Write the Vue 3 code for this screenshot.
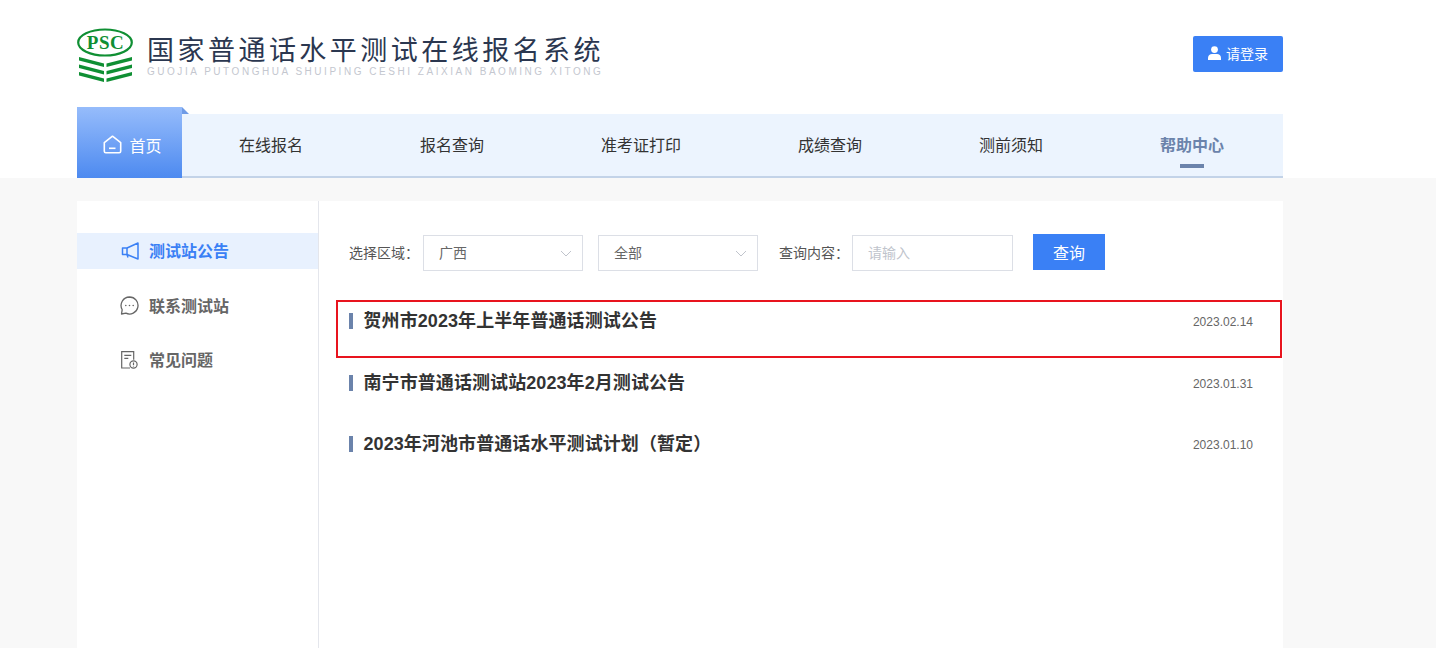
<script setup>
const navItems = ['在线报名', '报名查询', '准考证打印', '成绩查询', '测前须知', '帮助中心']
const notices = [
  { title: '贺州市2023年上半年普通话测试公告', date: '2023.02.14' },
  { title: '南宁市普通话测试站2023年2月测试公告', date: '2023.01.31' },
  { title: '2023年河池市普通话水平测试计划（暂定）', date: '2023.01.10' }
]
</script>

<template>
  <div class="page">
    <div class="top">
      <header class="header">
        <div class="brand">
          <svg class="logo" width="58" height="56" viewBox="0 0 58 56">
            <ellipse cx="28" cy="14.5" rx="26.8" ry="13" fill="none" stroke="#0f8f33" stroke-width="2.2" />
            <text x="28.5" y="21" text-anchor="middle" class="logo-text">PSC</text>
            <g fill="#0f8f33">
              <polygon points="2,29 27,35.5 27,39 2,32.5" />
              <polygon points="55,29 29.5,35.5 29.5,39 55,32.5" />
              <polygon points="2,36.5 27,43 27,46.5 2,40" />
              <polygon points="55,36.5 29.5,43 29.5,46.5 55,40" />
              <polygon points="2,44 27,50.5 27,54 2,47.5" />
              <polygon points="55,44 29.5,50.5 29.5,54 55,47.5" />
            </g>
          </svg>
          <div class="brand-text">
            <div class="brand-cn">国家普通话水平测试在线报名系统</div>
            <div class="brand-en">GUOJIA PUTONGHUA SHUIPING CESHI ZAIXIAN BAOMING XITONG</div>
          </div>
        </div>
        <button class="login">
          <svg width="13" height="14" viewBox="0 0 13 14" fill="#fff">
            <circle cx="6.5" cy="3.6" r="3.4" />
            <path d="M0 14v-2C0 9.4 2 8 4 8h5c2 0 4 1.4 4 4v2z" />
          </svg>
          <span>请登录</span>
        </button>
      </header>
      <nav class="nav">
        <a class="home">
          <svg width="19" height="19" viewBox="0 0 19 19" fill="none" stroke="#fff" stroke-width="1.6">
            <path d="M1.3 7.6 9.5 1.2l8.2 6.4v8.6a1.5 1.5 0 0 1-1.5 1.5H2.8a1.5 1.5 0 0 1-1.5-1.5z" stroke-linejoin="round" />
            <path d="M6 13.3h6.5" />
          </svg>
          <span>首页</span>
          <i class="fold"></i>
        </a>
        <div class="nav-list">
          <a v-for="(item, i) in navItems" :key="item" class="nav-item" :class="{ current: i === navItems.length - 1 }">{{ item }}</a>
        </div>
      </nav>
    </div>

    <main class="card">
      <aside class="side">
        <div class="side-item active">
          <span class="side-icon">
            <svg width="18" height="18" viewBox="0 0 18 18" fill="none" stroke="#3a80f5" stroke-width="1.5" stroke-linejoin="round">
              <path d="M17 1v16L6 12.5H1.5V6H6z" />
              <path d="M6 6v6.5l1 3" />
            </svg>
          </span>
          <span class="side-label">测试站公告</span>
        </div>
        <div class="side-item">
          <span class="side-icon">
            <svg width="19" height="19" viewBox="0 0 19 19" fill="none" stroke="#666" stroke-width="1.3">
              <path d="M9.5 1a8.5 8.5 0 1 1-3.6 16.2L1.5 18l.7-4.3A8.5 8.5 0 0 1 9.5 1z" stroke-linejoin="round" />
              <circle cx="5.8" cy="9.5" r=".8" fill="#666" stroke="none" />
              <circle cx="9.5" cy="9.5" r=".8" fill="#666" stroke="none" />
              <circle cx="13.2" cy="9.5" r=".8" fill="#666" stroke="none" />
            </svg>
          </span>
          <span class="side-label">联系测试站</span>
        </div>
        <div class="side-item">
          <span class="side-icon">
            <svg width="17" height="18" viewBox="0 0 17 18" fill="none" stroke="#666" stroke-width="1.2">
              <path d="M9 17H.7V.7h12v8" />
              <path d="M3.3 4.3h7M3.3 7.3h4" />
              <circle cx="12.5" cy="13.5" r="3.6" />
              <path d="M12.5 11.5v2.6M12.5 14.8v.8" />
            </svg>
          </span>
          <span class="side-label">常见问题</span>
        </div>
      </aside>

      <section class="content">
        <div class="filters">
          <label class="label">选择区域：</label>
          <div class="select">
            <span>广西</span>
            <svg width="12" height="7" viewBox="0 0 12 7" fill="none" stroke="#c0c4cc" stroke-width="1"><path d="M1 1l5 5 5-5" /></svg>
          </div>
          <div class="select">
            <span>全部</span>
            <svg width="12" height="7" viewBox="0 0 12 7" fill="none" stroke="#c0c4cc" stroke-width="1"><path d="M1 1l5 5 5-5" /></svg>
          </div>
          <label class="label label-q">查询内容：</label>
          <div class="input">请输入</div>
          <button class="search">查询</button>
        </div>
        <ul class="list">
          <li v-for="(n, i) in notices" :key="n.date" class="row">
            <i class="mark"></i>
            <span class="title">{{ n.title }}</span>
            <span class="date">{{ n.date }}</span>
            <i v-if="i === 0" class="highlight"></i>
          </li>
        </ul>
      </section>
    </main>
  </div>
</template>

<style>
html, body { margin: 0; padding: 0; background: #f8f8f8; }
</style>

<style scoped>
.page {
  height: 648px;
  overflow: hidden;
  background: #f8f8f8;
  font-family: "Liberation Sans", "Noto Sans CJK SC", sans-serif;
  color: #333;
}
.top { background: #fff; }
.header {
  width: 1206px;
  height: 107px;
  margin-left: 77px;
  display: flex;
  justify-content: space-between;
  align-items: flex-start;
}
.brand { display: flex; padding-top: 28px; }
.logo { display: block; }
.logo-text {
  font-family: "Liberation Serif", serif;
  font-weight: 700;
  font-size: 19px;
  letter-spacing: .5px;
  fill: #0f8f33;
}
.brand-text { margin-left: 12px; }
.brand-cn {
  font-family: "Noto Sans CJK SC", sans-serif;
  font-size: 27px;
  line-height: 34px;
  height: 34px;
  margin-top: 4px;
  letter-spacing: 3.47px;
  font-weight: 400;
  color: #2b3750;
  white-space: nowrap;
  width: 456px;
}
.brand-en {
  margin-top: 1px;
  font-size: 10px;
  line-height: 10px;
  letter-spacing: 2.53px;
  color: #c4c7cf;
  white-space: nowrap;
}
.login {
  margin-top: 36px;
  width: 90px;
  height: 36px;
  border: 0;
  border-radius: 2px;
  background: #3a80f5;
  color: #fff;
  font-family: inherit;
  font-size: 14px;
  display: flex;
  align-items: center;
  justify-content: center;
  gap: 5px;
  padding: 0 0 2px;
}
.nav {
  width: 1206px;
  height: 71px;
  margin-left: 77px;
  display: flex;
  align-items: flex-end;
}
.home {
  position: relative;
  width: 105px;
  height: 71px;
  box-sizing: border-box;
  background: linear-gradient(180deg, #96bcfb 0%, #4d8af0 100%);
  color: #fff;
  font-size: 16px;
  display: flex;
  align-items: center;
  justify-content: center;
  gap: 7px;
  padding-top: 4px;
  padding-left: 6px;
}
.fold {
  position: absolute;
  left: 105px;
  top: 0;
  width: 0;
  height: 0;
  border-style: solid;
  border-width: 7px 0 0 7px;
  border-color: transparent transparent transparent #6f9be6;
}
.nav-list {
  flex: 1;
  height: 64px;
  box-sizing: border-box;
  background: #ecf4fe;
  border-bottom: 2px solid #c3d3e8;
  display: flex;
  align-items: center;
  gap: 117px;
  padding-left: 57px;
  padding-top: 2px;
}
.nav-item {
  position: relative;
  font-size: 16px;
  line-height: 24px;
  color: #333;
  white-space: nowrap;
}
.nav-item.current {
  font-weight: 700;
  color: #6b83ab;
}
.nav-item.current::after {
  content: "";
  position: absolute;
  left: 50%;
  bottom: -10px;
  width: 24px;
  height: 4px;
  margin-left: -12px;
  background: #6b83ab;
}
.card {
  width: 1206px;
  height: 447px;
  margin: 23px 0 0 77px;
  background: #fff;
  display: flex;
}
.side {
  width: 242px;
  box-sizing: border-box;
  border-right: 1px solid #e4e6ec;
  padding-top: 32px;
}
.side-item {
  height: 36px;
  margin-bottom: 18.5px;
  display: flex;
  align-items: center;
  gap: 10px;
  padding-left: 43px;
  font-size: 16px;
  line-height: 34px;
  font-weight: 700;
  color: #666;
}
.side-label { margin-top: 2px; }
.side-icon {
  width: 19px;
  display: flex;
  justify-content: center;
}
.side-item.active {
  background: #e8f1fe;
  color: #3a80f5;
}
.content { flex: 1; min-width: 0; }
.filters {
  display: flex;
  align-items: flex-start;
  padding: 33px 0 0 30px;
  height: 36px;
}
.label {
  font-size: 14px;
  line-height: 38px;
  color: #555;
  width: 74px;
  white-space: nowrap;
}
.label-q { width: 73px; margin-left: 21px; }
.select, .input {
  box-sizing: border-box;
  width: 160px;
  height: 36px;
  margin-top: 1px;
  border: 1px solid #dcdfe6;
  display: flex;
  align-items: center;
  justify-content: space-between;
  padding: 0 10px 2px 15px;
  font-size: 14px;
  color: #666;
}
.select svg { margin-top: 2px; }
.select + .select { margin-left: 15px; }
.input { width: 161px; color: #c0c4cc; }
.search {
  width: 72px;
  height: 36px;
  margin-left: 20px;
  border: 0;
  padding: 0;
  background: #3a80f5;
  color: #fff;
  font-family: inherit;
  font-size: 16px;
}
.list {
  list-style: none;
  margin: 30px 0 0;
  padding: 0 30px 0 30px;
}
.row {
  position: relative;
  height: 61.5px;
  display: flex;
  align-items: flex-start;
}
.mark {
  width: 4px;
  height: 16px;
  margin-top: 13px;
  background: #6b83ab;
}
.title {
  flex: 1;
  margin-left: 10.5px;
  font-size: 18px;
  line-height: 42px;
  letter-spacing: .08px;
  font-weight: 700;
  color: #333;
}
.date {
  font-size: 12px;
  line-height: 44px;
  color: #666;
}
.highlight {
  position: absolute;
  left: -13px;
  top: 0;
  width: 946px;
  height: 58px;
  box-sizing: border-box;
  border: 2px solid #e8141e;
  pointer-events: none;
}
</style>
